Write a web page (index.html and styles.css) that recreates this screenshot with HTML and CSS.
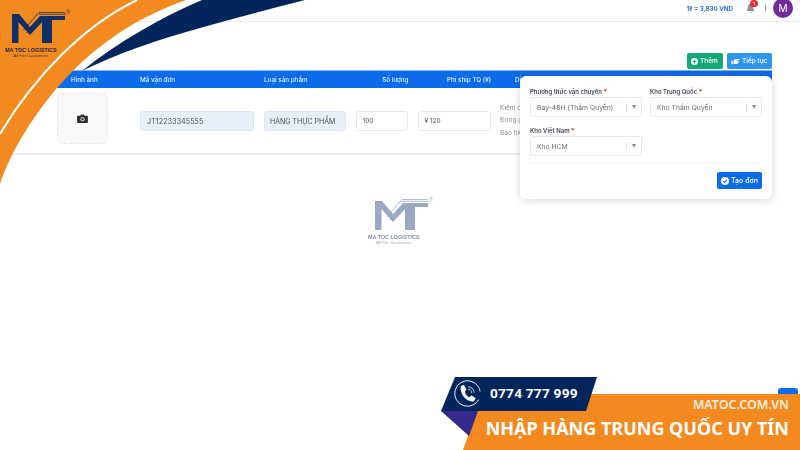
FILE: index.html
```html
<!DOCTYPE html>
<html lang="vi">
<head>
<meta charset="utf-8">
<title>Ma Toc Logistics</title>
<link rel="stylesheet" href="styles.css">
</head>
<body>
<svg class="defs" width="0" height="0" aria-hidden="true">
  <symbol id="mt-mark" viewBox="0 0 56 32">
    <path class="mark-body" d="M1 31V2H8L19 15 29 4H54V8H41V31H31V8H33L19 23 7.500 10V31Z"/>
    <path class="mark-line" d="M12.500 18 28 .5H54M15.500 21 28.500 6.500"/>
    <path class="mark-line" d="M28 2.300H55"/>
  </symbol>
</svg>
<div class="app">
  <header class="topbar">
    <span class="rate">1¥ = 3,830 VND</span>
    <span class="bell">
      <svg viewBox="0 0 12 12" width="11" height="11"><path d="M6 1.200C3.800 1.200 3 3 3 5 3 7 2 8 1.300 8.800H10.700C10 8 9 7 9 5 9 3 8.200 1.200 6 1.200ZM4.700 9.800A1.400 1.400 0 0 0 7.300 9.800Z" fill="#8b8f94"/></svg>
      <i class="badge">1</i>
    </span>
    <span class="sep"></span>
    <span class="avatar">M</span>
  </header>
  <div class="toolbar">
    <button class="btn btn-green">
      <svg viewBox="0 0 10 10" width="7" height="7"><circle cx="5" cy="5" r="5" fill="#fff"/><path d="M5 2.500V7.500M2.500 5H7.500" stroke="#12a877" stroke-width="1.500"/></svg>
      Thêm
    </button>
    <button class="btn btn-sky">
      <svg viewBox="0 0 12 10" width="9" height="7"><path d="M0 4H2V9H0ZM3 4 6 1.500H11.500V3H8V4H11V5.500H10V7H9V8.500H4.500L3 8Z" fill="#fff"/></svg>
      Tiếp tục
    </button>
  </div>
  <section class="table">
    <div class="thead grid">
      <span class="th-img">Hình ảnh</span>
      <span>Mã vận đơn</span>
      <span>Loại sản phẩm</span>
      <span class="th-end">Số lượng</span>
      <span class="th-end">Phí ship TQ (¥)</span>
      <span class="th-svc">Dịch vụ</span>
    </div>
    <div class="trow grid">
      <div class="photo">
        <svg viewBox="0 0 12 10" width="11" height="9"><path d="M1 2H3.500L4.500 .5H7.500L8.500 2H11Q12 2 12 3V9Q12 10 11 10H1Q0 10 0 9V3Q0 2 1 2Z" fill="#2b2d31"/><circle cx="6" cy="5.800" r="2.300" fill="#f9f9f9"/><circle cx="6" cy="5.800" r="1.300" fill="#2b2d31"/></svg>
      </div>
      <div class="field field-code">JT12233345555</div>
      <div class="field field-type">HÀNG THỰC PHẨM</div>
      <div class="field field-qty">100</div>
      <div class="field field-fee">¥ 120</div>
      <ul class="services">
        <li>Kiểm đếm</li>
        <li>Đóng gỗ</li>
        <li>Bảo hiểm</li>
      </ul>
    </div>
  </section>
  <div class="watermark logo">
    <svg class="logo-mark" width="56" height="32"><use href="#mt-mark"/></svg>
    <span class="reg">®</span>
    <strong class="logo-name">MA TOC LOGISTICS</strong>
    <em class="logo-sub">All For Customers</em>
  </div>
</div>

<div class="float-btn"></div>

<svg class="swoosh" viewBox="0 0 310 190" width="310" height="190" aria-hidden="true">
  <path class="sw-navy" d="M202 0C160 18 118 42 82 71 130 48 165 38 200 28 235 18 270 9 305 0Z"/>
  <path class="sw-orange" d="M0 0H186C130 20 90 50 57 88 36 113 12 148 0 184Z"/>
  <path class="sw-white" d="M137 0C85 25 35 75 0 134" />
</svg>

<div class="brand logo">
  <svg class="logo-mark" width="56" height="32"><use href="#mt-mark"/></svg>
  <span class="reg">®</span>
  <strong class="logo-name">MA TOC LOGISTICS</strong>
  <em class="logo-sub">All For Customers</em>
</div>

<form class="pop">
  <div class="pop-grid">
    <div class="pf">
      <label>Phương thức vận chuyển <b>*</b></label>
      <div class="select"><span>Bay-48H (Thẩm Quyền)</span><i class="caret"></i></div>
    </div>
    <div class="pf">
      <label>Kho Trung Quốc <b>*</b></label>
      <div class="select"><span>Kho Thẩm Quyền</span><i class="caret"></i></div>
    </div>
    <div class="pf">
      <label>Kho Việt Nam <b>*</b></label>
      <div class="select"><span>Kho HCM</span><i class="caret"></i></div>
    </div>
  </div>
  <div class="pop-foot">
    <button class="btn btn-blue" type="button">
      <svg viewBox="0 0 10 10" width="8" height="8"><circle cx="5" cy="5" r="5" fill="#fff"/><path d="M2.700 5.200 4.400 6.800 7.400 3.500" fill="none" stroke="#0b6be8" stroke-width="1.300"/></svg>
      Tạo đơn
    </button>
  </div>
</form>

<aside class="banner">
  <div class="banner-shapes">
    <div class="shape-orange"></div>
    <div class="shape-purple"></div>
    <div class="shape-navy"></div>
  </div>
  <div class="phone">
    <span class="phone-ico">
      <svg viewBox="0 0 26 26" width="27" height="27"><circle cx="13" cy="13" r="12.300" fill="none" stroke="#fff" stroke-width=".8" stroke-dasharray="62 8" transform="rotate(60 13 13)"/><path d="M6.500 6 9.500 4.500 12 9 10.500 11.500C11 13.500 12.500 15.500 14.500 16.500L17 15 21 17.500 19 20.500C12.500 22 5 13 6.500 6Z" fill="#fff"/><path d="M13.500 6.500A6 6 0 0 1 19.500 12.500M13.500 9A3.500 3.500 0 0 1 17 12.500" fill="none" stroke="#9fb2d0" stroke-width="1"/></svg>
    </span>
    <span class="phone-num">0774 777 999</span>
  </div>
  <div class="slogan">
    <span class="site">MATOC.COM.VN</span>
    <span class="headline">NHẬP HÀNG TRUNG QUỐC UY TÍN</span>
  </div>
</aside>
</body>
</html>
```
FILE: styles.css
```css
* { box-sizing: border-box; }
html, body { margin: 0; padding: 0; }
body {
  width: 800px;
  height: 450px;
  overflow: hidden;
  position: relative;
  background: #fff;
  font-family: Inter, "Liberation Sans", sans-serif;
  color: #444;
}
.defs { position: absolute; }
.mark-body { fill: currentColor; }
.mark-line { fill: none; stroke: currentColor; stroke-width: .8; }

.app { filter: blur(.35px); }

.topbar {
  height: 22px;
  border-bottom: 1px solid #ececec;
  display: flex;
  align-items: center;
  justify-content: flex-end;
  padding: 0 7px 5px 0;
  overflow: visible;
}
.rate { font-size: 6.200px; font-weight: 700; color: #2f6fc4; margin-right: 12px; white-space: nowrap; }
.bell { position: relative; display: flex; margin-right: 9px; }
.badge {
  position: absolute;
  top: -3px;
  left: 5px;
  width: 8px;
  height: 7px;
  border-radius: 4px;
  background: #e5303a;
  color: #fff;
  font: 700 4px/7px Inter, sans-serif;
  text-align: center;
}
.sep { width: 1px; height: 6px; background: #7aa6dc; margin-right: 7px; }
.avatar {
  width: 20px;
  height: 20px;
  flex: none;
  margin-top: -1px;
  border-radius: 50%;
  background: #6f2b9a;
  color: #fff;
  font-size: 10px;
  line-height: 20px;
  text-align: center;
}

.toolbar {
  height: 48px;
  display: flex;
  justify-content: flex-end;
  align-items: flex-end;
  gap: 4px;
  padding: 0 28px 1px 0;
}
.btn {
  border: 0;
  border-radius: 2px;
  height: 16px;
  padding: 0 3px 0 4px;
  display: inline-flex;
  align-items: center;
  gap: 2px;
  color: #fff;
  white-space: nowrap;
  font: 500 6.500px Inter, sans-serif;
}
.btn-green { background: #12a877; width: 36px; }
.btn-sky { background: #2f96ec; width: 45px; }
.btn-blue { background: #0b6be8; width: 45px; height: 17px; font-size: 7px; }

.table { margin-right: 28px; }
.grid {
  display: grid;
  grid-template-columns: 140px 124px 91.500px 62px 82.500px 1fr;
  align-items: center;
}
.thead {
  height: 18px;
  border-top: 1px solid #7fb2f0;
  background: #0b6be8;
  color: #e6f0ff;
  font-size: 6.300px;
  font-weight: 500;
}
.thead span { white-space: nowrap; }
.th-img { padding-left: 71px; }
.th-end { text-align: right; padding-right: 9px; }
.th-svc { padding-left: 15px; }
.trow {
  height: 67px;
  border-bottom: 2px solid #eeeeee;
}
.photo {
  margin-left: 57px;
  width: 51px;
  height: 51px;
  margin-top: -4px;
  border: 1px dashed #e8e8e8;
  border-radius: 6px;
  background: #f9f9f9;
  display: flex;
  align-items: center;
  justify-content: center;
}
.field {
  height: 20px;
  border: 1px solid #e6e8ec;
  border-radius: 2.500px;
  padding-left: 6px;
  font-size: 6.500px;
  line-height: 19px;
  color: #4a4f57;
  background: #fff;
  margin-right: 10px;
  white-space: nowrap;
}
.field-code, .field-type { background: #e8effb; border-color: #dde5f3; }
.field-code { font-size: 7.100px; letter-spacing: .1px; }
.field-type { font-size: 7px; padding-left: 5px; }
.field-fee { margin-right: 9.500px; }
.services {
  list-style: none;
  margin: 0;
  padding: 0;
  font-size: 6.500px;
  line-height: 12.500px;
  color: #8b8f94;
  white-space: nowrap;
}

.watermark {
  position: relative;
  margin: 44px 0 0 368px;
  color: #9aa9c3;
}
.logo { width: 60px; display: block; }
.logo-mark { display: block; margin-left: 6px; }
.logo-name {
  display: block;
  font: 700 5.400px/6px "Liberation Sans", sans-serif;
  white-space: nowrap;
  margin-top: 3px;
}
.logo-sub {
  display: block;
  font: italic 4.400px/5px "Liberation Sans", sans-serif;
  padding-left: 8px;
  white-space: nowrap;
}
.reg {
  position: absolute;
  font: 6px/6px "Liberation Sans", sans-serif;
  left: 61px;
  top: -3px;
}
.watermark .logo-name { color: #7f8ca6; }
.watermark .logo-sub { color: #a0a8b6; }

.swoosh { position: absolute; left: 0; top: 0; }
.sw-navy { fill: #02255c; }
.sw-orange { fill: #f38a20; }
.sw-white { fill: none; stroke: #fff; stroke-width: 2; }

.brand {
  position: absolute;
  left: 5px;
  top: 12px;
  color: #0f2f66;
}
.brand .logo-name { color: #1b2740; }
.brand .logo-sub { color: #3a3a3a; }
.brand .reg { color: #23365e; }

.pop {
  position: absolute;
  left: 520px;
  top: 76px;
  width: 252px;
  height: 123px;
  padding: 11px 10px 10px;
  background: #fff;
  border-radius: 6px;
  box-shadow: 0 1px 8px rgba(30, 40, 70, .18);
  filter: blur(.3px);
}
.pop-grid {
  display: grid;
  grid-template-columns: 112px 112px;
  column-gap: 8px;
  row-gap: 9px;
  padding-bottom: 7px;
  border-bottom: 1px solid #f1f1f1;
}
.pf label {
  display: block;
  font-size: 6px;
  line-height: 10px;
  font-weight: 600;
  color: #454a52;
  white-space: nowrap;
}
.pf b { color: #e5303a; }
.select {
  height: 20px;
  border: 1px solid #e6e8ec;
  border-radius: 3px;
  display: flex;
  align-items: center;
  padding: 0 5px 0 6px;
  font-size: 6.800px;
  color: #666b73;
}
.select span { flex: 1; white-space: nowrap; }
.caret {
  width: 10px;
  height: 8px;
  border-left: 1px solid #ddd;
  position: relative;
  flex: none;
}
.caret::after {
  content: "";
  position: absolute;
  right: 0;
  top: 2px;
  border: 2.500px solid transparent;
  border-top: 4px solid #8b8f94;
  border-bottom: 0;
}
.pop-foot { display: flex; justify-content: flex-end; padding-top: 8px; }

.float-btn {
  position: absolute;
  left: 778px;
  top: 388px;
  width: 20px;
  height: 20px;
  border-radius: 3px;
  background: #0b6be8;
}
.banner {
  position: absolute;
  left: 440px;
  top: 376px;
  width: 360px;
  height: 74px;
}
.banner-shapes div { position: absolute; }
.shape-orange {
  left: 23px;
  top: 18px;
  width: 337px;
  height: 56px;
  background: #f38a20;
  clip-path: polygon(20px 0, 100% 0, 100% 100%, 0 100%);
}
.shape-purple {
  left: 1px;
  top: 35px;
  width: 37px;
  height: 25px;
  background: #352a8c;
  clip-path: polygon(0 0, 100% 0, 28px 100%);
}
.shape-navy {
  left: 1px;
  top: 1px;
  width: 156px;
  height: 34px;
  background: #02255c;
  clip-path: polygon(14px 0, 100% 0, 145px 100%, 0 100%);
}
.phone {
  position: absolute;
  left: 14px;
  top: 4px;
  display: flex;
  align-items: center;
  gap: 9px;
}
.phone-ico { display: flex; }
.phone-num {
  font: 700 13.700px/27px Roboto, sans-serif;
  color: #fff;
  letter-spacing: .2px;
}
.slogan {
  position: absolute;
  right: 11px;
  top: 20px;
  display: flex;
  flex-direction: column;
  align-items: flex-end;
  font-family: "Noto Sans", sans-serif;
  font-weight: 700;
}
.site { font-size: 12.500px; line-height: 18px; color: #fdeedd; font-weight: 600; }
.headline { font-size: 18px; line-height: 28px; color: #fff; white-space: nowrap; }
```
